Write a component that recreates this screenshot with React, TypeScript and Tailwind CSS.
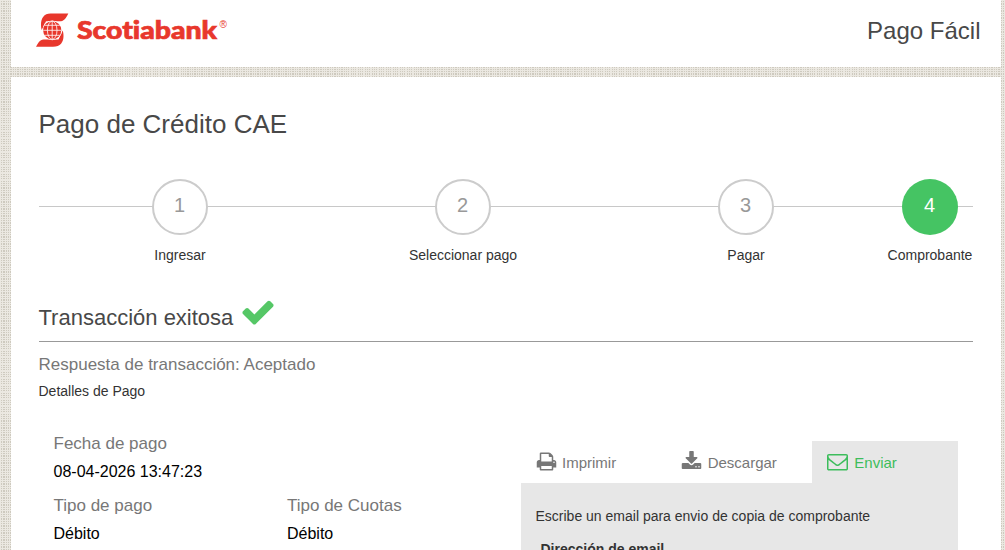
import type { ReactNode } from "react";

const ICONS = {
  print:
    "M448 1536h896v-256h-896v256zm0-640h896v-384h-160q-40 0-68-28t-28-68v-160h-640v640zm1152 64q0-26-19-45t-45-19-45 19-19 45 19 45 45 19 45-19 19-45zm128 0v416q0 13-9.5 22.5t-22.5 9.5h-224v160q0 40-28 68t-68 28h-960q-40 0-68-28t-28-68v-160h-224q-13 0-22.5-9.5t-9.5-22.5v-416q0-79 56.5-135.5t135.5-56.5h64v-544q0-40 28-68t68-28h672q40 0 88 20t76 48l152 152q28 28 48 76t20 88v256h64q79 0 135.5 56.5t56.5 135.5z",
  download:
    "M1344 1344q0-26-19-45t-45-19-45 19-19 45 19 45 45 19 45-19 19-45zm256 0q0-26-19-45t-45-19-45 19-19 45 19 45 45 19 45-19 19-45zm128-224v320q0 40-28 68t-68 28h-1472q-40 0-68-28t-28-68v-320q0-40 28-68t68-28h465l135 136q58 56 136 56t136-56l136-136h464q40 0 68 28t28 68zm-325-569q17 41-14 70l-448 448q-18 19-45 19t-45-19l-448-448q-31-29-14-70 17-39 59-39h256v-448q0-26 19-45t45-19h256q26 0 45 19t19 45v448h256q42 0 59 39z",
  envelope:
    "M1664 1504v-768q-32 36-69 66-268 206-426 338-51 43-83 67t-86.5 48.5-102.5 24.5h-2q-48 0-102.5-24.5t-86.5-48.5-83-67q-158-132-426-338-37-30-69-66v768q0 13 9.5 22.5t22.5 9.5h1472q13 0 22.5-9.5t9.5-22.5zm0-1051v-24.5l-.5-13-3-12.5-5.5-9-9-7.5-14-2.5h-1472q-13 0-22.5 9.5t-9.5 22.5q0 168 147 284 193 152 401 317 6 5 35 29.5t46 37.5 44.5 31.5 50.5 27.5 43 9h2q20 0 43-9t50.5-27.5 44.5-31.5 46-37.5 35-29.5q208-165 401-317 54-43 100.5-115.5t46.5-131.5zm128-37v1088q0 66-47 113t-113 47h-1472q-66 0-113-47t-47-113v-1088q0-66 47-113t113-47h1472q66 0 113 47t47 113z",
  check:
    "M1671 566q0 40-28 68l-724 724-136 136q-28 28-68 28t-68-28l-136-136-362-362q-28-28-28-68t28-68l136-136q28-28 68-28t68 28l294 295 656-657q28-28 68-28t68 28l136 136q28 28 28 68z",
};

const STEPS = [
  { label: "Ingresar", width: "w-[283px]" },
  { label: "Seleccionar pago", width: "w-[283px]" },
  { label: "Pagar", width: "w-[283px]" },
  { label: "Comprobante", width: "w-[85px]" },
];

const TABS = [
  { label: "Imprimir", icon: ICONS.print },
  { label: "Descargar", icon: ICONS.download },
  { label: "Enviar", icon: ICONS.envelope },
];

function Icon({ path, className }: { path: string; className: string }) {
  return (
    <svg className={`shrink-0 ${className}`} viewBox="0 0 1792 1792" fill="currentColor">
      <path d={path} />
    </svg>
  );
}

function Logo() {
  return (
    <svg className="h-[40px] w-[196px]" viewBox="0 0 196 40">
      {/* S con globo */}
      <path
        d="M32.3 3.6H14.5C8 3.6 5 8.5 5 14.5C5 16.5 5.2 18.5 5.8 20L10 11.2H25C28.5 11.2 30.8 6.5 32.3 3.6Z"
        fill="#e8372c"
      />
      <path
        d="M0 36.8H17C24.5 36.8 27.5 32 27.5 26C27.5 24 27.2 22 26.6 20.5L22.5 29.5H7.5C3.8 29.5 1.6 34 0 36.8Z"
        fill="#e8372c"
      />
      <circle cx="16.2" cy="20.3" r="9.9" fill="#fff" />
      <circle cx="16.2" cy="20.3" r="9.1" fill="#e8372c" />
      <g fill="none" stroke="#fff" strokeWidth="0.8">
        <ellipse cx="16.2" cy="20.3" rx="4.8" ry="9.1" />
        <path d="M16.2 11.2V29.4M7.1 20.3H25.3M8.6 15.3H23.8M8.6 25.3H23.8" />
      </g>
      <text
        x="41"
        y="28.8"
        textLength="140"
        lengthAdjust="spacingAndGlyphs"
        className="fill-[#e8372c] stroke-[#e8372c] stroke-[0.7] font-['Lato'] text-[24px] font-black [font-variant-ligatures:none]"
      >
        Scotiabank
      </text>
      <text x="183.5" y="17.8" className="fill-[#e8372c] font-['Liberation_Sans'] text-[10px]">
        ®
      </text>
    </svg>
  );
}

function Field({ label, children }: { label: string; children: ReactNode }) {
  return (
    <div className="w-[233.5px]">
      <p className="h-[27px] text-[17px] leading-[26px] text-[#777]">{label}</p>
      <p className="h-[35px] text-base leading-[28px] text-black">{children}</p>
    </div>
  );
}

export default function App() {
  return (
    <div className="h-[550px] overflow-hidden bg-[#cecabf] bg-[repeating-linear-gradient(90deg,#ebe8e1_0_1.1px,transparent_1.1px_2.33px),repeating-linear-gradient(#ebe8e1_0_1.1px,transparent_1.1px_2.33px)] pr-[4px] pl-[11px] font-['Liberation_Sans',Arial,sans-serif] text-[#333]">
      <header className="flex h-[67px] justify-between bg-white pr-[20.5px] pl-[25px]">
        <div className="pt-[10px]">
          <Logo />
        </div>
        <span className="pt-[17px] text-[24px] leading-[28px] text-[#484848]">Pago Fácil</span>
      </header>

      <main className="mt-[10px] h-[473px] bg-white pt-[32px] pr-[28px] pl-[27.5px]">
        <h1 className="h-[70px] text-[26px] leading-[30px] text-[#484848]">Pago de Crédito CAE</h1>

        {/* Pasos */}
        <ol className="flex h-[121px] bg-[linear-gradient(#c8c8c8,#c8c8c8)] bg-[length:100%_1px] bg-[position:0_27px] bg-no-repeat">
          {STEPS.map((step, i) => (
            <li key={step.label} className={`flex shrink-0 flex-col items-center ${step.width}`}>
              <span
                className={`-ml-px flex h-[56px] w-[56px] justify-center rounded-full text-[20px] ${
                  i === 3
                    ? "bg-[#45c463] leading-[53px] text-white"
                    : "border-2 border-[#ccc] bg-white leading-[49px] text-[#999]"
                }`}
              >
                {i + 1}
              </span>
              <span className="mt-[10px] text-[14px] leading-[20px] whitespace-nowrap">{step.label}</span>
            </li>
          ))}
        </ol>

        <div className="flex h-[42px] border-b border-[#999]">
          <h2 className="pt-[5px] text-[22px] leading-[26px] text-[#484848]">Transacción exitosa</h2>
          <Icon path={ICONS.check} className="-mt-[6px] ml-[6.5px] h-[36px] w-[36px] text-[#55c766]" />
        </div>

        <p className="mt-[12px] text-[17px] leading-[22px] text-[#777]">
          Respuesta de transacción: Aceptado
        </p>
        <p className="mt-[6px] text-[14px] leading-[18px]">Detalles de Pago</p>

        <div className="mt-[41px] flex">
          <div className="-mt-[10px] flex w-[482.5px] flex-wrap content-start pl-[15px]">
            <div className="w-full">
              <Field label="Fecha de pago">08-04-2026 13:47:23</Field>
            </div>
            <Field label="Tipo de pago">Débito</Field>
            <Field label="Tipo de Cuotas">Débito</Field>
          </div>

          <div className="w-[437px]">
            <div className="flex">
              {TABS.map((tab, i) => (
                <button
                  key={tab.label}
                  className={`flex h-[42px] flex-1 items-center pl-[15px] text-[15px] ${
                    i === 2 ? "bg-[#e7e7e7] text-[#3dbd5c]" : "text-[#777]"
                  }`}
                >
                  <Icon path={tab.icon} className="-mt-px -ml-[0.5px] h-[21px] w-[21px]" />
                  <span className={`pt-[2px] ${i === 2 ? "pl-[6.5px]" : "pl-[5.5px]"}`}>{tab.label}</span>
                </button>
              ))}
            </div>
            <div className="h-[120px] bg-[#e7e7e7] pt-[23px] pl-[14.5px] text-[14px] leading-[20px]">
              <p>Escribe un email para envio de copia de comprobante</p>
              <p className="mt-[13px] pl-[5px] font-bold">Dirección de email</p>
            </div>
          </div>
        </div>
      </main>
    </div>
  );
}
